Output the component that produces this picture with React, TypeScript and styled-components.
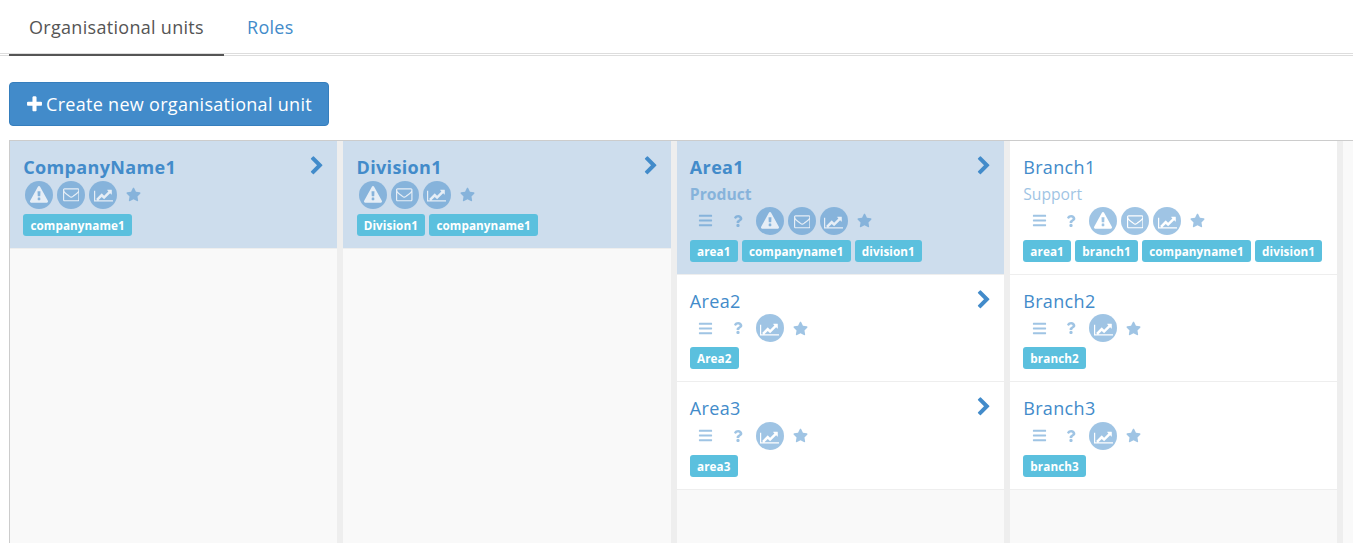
import * as React from 'react';
import styled, { createGlobalStyle } from 'styled-components';
import { FaBars, FaQuestion, FaStar } from 'react-icons/fa';

const GlobalStyle = createGlobalStyle`
  html, body, #root {
    height: 100%;
    margin: 0;
  }
  body {
    overflow: hidden;
    background: #fff;
    font-family: "Open Sans", "Liberation Sans", sans-serif;
    color: #555;
  }
`;

const Page = styled.div`
  height: 100%;
  display: flex;
  flex-direction: column;
  padding-left: 9px;
  box-sizing: border-box;
`;

const TabBar = styled.div`
  display: flex;
  height: 56px;
  margin-left: -9px;
  padding-left: 9px;
  border-bottom: 3px double #ddd;
  box-sizing: border-box;
  flex: none;
`;

const Tab = styled.div<{ $active?: boolean }>`
  height: 56px;
  padding: 15px 20px 0;
  box-sizing: border-box;
  font-size: 18px;
  line-height: 24px;
  letter-spacing: 0.3px;
  color: ${(p) => (p.$active ? '#555' : '#428bca')};
  border-bottom: 2px solid ${(p) => (p.$active ? '#555' : 'transparent')};
  margin-right: 3px;
`;

const Toolbar = styled.div`
  flex: none;
  padding: 26px 0 14px;
`;

const CreateButton = styled.button`
  display: flex;
  align-items: center;
  gap: 2px;
  width: 320px;
  height: 44px;
  padding: 0 15px;
  box-sizing: border-box;
  background: #428bca;
  border: 1px solid #357ebd;
  border-radius: 4px;
  color: #fff;
  font-family: inherit;
  font-size: 18px;
  letter-spacing: 0.3px;
  white-space: nowrap;
`;

const Board = styled.div`
  flex: 1;
  min-height: 0;
  display: flex;
  overflow: hidden;
  border-top: 1px solid #ccc;
  border-left: 1px solid #ccc;
`;

const Column = styled.div`
  flex: none;
  width: 333.33px;
  box-sizing: border-box;
  background: #f9f9f9;
  border-right: 6px solid #eee;
`;

const Card = styled.div<{ $selected?: boolean }>`
  position: relative;
  padding: 13px 13px 12px 13.2px;
  background: ${(p) => (p.$selected ? '#cddded' : '#fff')};
  border-bottom: 1px solid #eee;
`;

const Name = styled.div<{ $selected?: boolean }>`
  font-size: 18px;
  line-height: 26.5px;
  letter-spacing: 0.35px;
  font-weight: ${(p) => (p.$selected ? 700 : 400)};
  color: #428bca;
`;

const Subtitle = styled.div<{ $selected?: boolean }>`
  font-size: 15.7px;
  line-height: 22px;
  margin: 2.8px 0 1.5px;
  font-weight: ${(p) => (p.$selected ? 700 : 400)};
  color: #428bca;
  opacity: 0.5;
`;

const Chevron = styled.svg`
  position: absolute;
  top: 15px;
  right: 10px;
  width: 20px;
  height: 20px;
  fill: #428bca;
`;

const IconRow = styled.div`
  display: flex;
  align-items: center;
  height: 28px;
  color: #428bca;
`;

const PlainIcon = styled.span<{ $pull?: boolean }>`
  width: 32px;
  height: 28px;
  margin-left: ${(p) => (p.$pull ? '-1.5px' : '0')};
  display: flex;
  align-items: center;
  justify-content: center;
  font-size: 15px;
  opacity: 0.5;
`;

const Circle = styled.span`
  width: 28px;
  height: 28px;
  margin: 0 2px;
  border-radius: 50%;
  display: flex;
  align-items: center;
  justify-content: center;
  background: #428bca;
  color: #fff;
  opacity: 0.5;
`;

const Glyph = styled.svg`
  fill: currentColor;
  display: block;
`;

const TagRow = styled.div`
  display: flex;
  gap: 4px;
  margin-top: 5px;
`;

const Tag = styled.span`
  height: 22px;
  padding: 0 7.2px;
  border-radius: 3px;
  background: #5bc0de;
  color: #fff;
  font-size: 11.7px;
  font-weight: 700;
  line-height: 22px;
  letter-spacing: 0.1px;
  white-space: nowrap;
`;

const PlusIcon = () => (
  <Glyph viewBox="0 0 1792 1792" width={19} height={19}>
    <path d="M1600 736v192q0 40-28 68t-68 28h-416v416q0 40-28 68t-68 28h-192q-40 0-68-28t-28-68v-416h-416q-40 0-68-28t-28-68v-192q0-40 28-68t68-28h416v-416q0-40 28-68t68-28h192q40 0 68 28t28 68v416h416q40 0 68 28t28 68z" />
  </Glyph>
);

const WarningIcon = () => (
  <Glyph viewBox="0 0 1792 1792" width={18} height={18}>
    <path d="M1024 1375v-190q0-14-9.5-23.5t-22.5-9.5h-192q-13 0-22.5 9.5t-9.5 23.5v190q0 14 9.5 23.5t22.5 9.5h192q13 0 22.5-9.5t9.5-23.5zm-2-374l18-459q0-12-10-19-13-11-24-11h-220q-11 0-24 11-10 7-10 21l17 457q0 10 10 16.5t24 6.5h185q14 0 23.5-6.5t10.5-16.5zm-14-934l768 1408q35 63-2 126-17 29-46.5 46t-63.5 17h-1536q-34 0-63.5-17t-46.5-46q-37-63-2-126l768-1408q17-31 47-49t65-18 65 18 47 49z" />
  </Glyph>
);

const EnvelopeIcon = () => (
  <Glyph viewBox="0 0 1792 1792" width={16.5} height={16.5}>
    <path d="M1664 1504v-768q-32 36-69 66-268 206-426 338-51 43-83 67t-86.5 48.5-102.5 24.5h-2q-48 0-102.5-24.5t-86.5-48.5-83-67q-158-132-426-338-37-30-69-66v768q0 13 9.5 22.5t22.5 9.5h1472q13 0 22.5-9.5t9.5-22.5zm0-1051v-24.5l-.5-13-3-12.5-5.5-9-9-7.5-14-2.5h-1472q-13 0-22.5 9.5t-9.5 22.5q0 168 147 284 193 152 401 317 6 5 35 29.5t46 37.5 44.5 31.5 50.5 27.5 43 9h2q20 0 43-9t50.5-27.5 44.5-31.5 46-37.5 35-29.5q208-165 401-317 54-43 100.5-115.5t46.5-131.5zm128-37v1088q0 66-47 113t-113 47h-1472q-66 0-113-47t-47-113v-1088q0-66 47-113t113-47h1472q66 0 113 47t47 113z" />
  </Glyph>
);

const ChartIcon = () => (
  <Glyph viewBox="0 0 2048 1792" width={19} height={16.6}>
    <path d="M2048 1536v128h-2048v-1152h128v1024h1920zm-128-1088v435q0 21-19.5 29.5t-35.5-7.5l-121-121-633 633q-10 10-23 10t-23-10l-233-233-416 416-192-192 585-585q10-10 23-10t23 10l233 233 464-464-121-121q-16-16-7.5-35.5t29.5-19.5h435q14 0 23 9t9 23z" />
  </Glyph>
);

type Unit = {
  name: string;
  subtitle?: string;
  selected?: boolean;
  next?: boolean;
  tools?: boolean;
  alerts?: boolean;
  tags: string[];
};

const columns: Unit[][] = [
  [{ name: 'CompanyName1', selected: true, next: true, alerts: true, tags: ['companyname1'] }],
  [{ name: 'Division1', selected: true, next: true, alerts: true, tags: ['Division1', 'companyname1'] }],
  [
    {
      name: 'Area1',
      subtitle: 'Product',
      selected: true,
      next: true,
      tools: true,
      alerts: true,
      tags: ['area1', 'companyname1', 'division1'],
    },
    { name: 'Area2', next: true, tools: true, tags: ['Area2'] },
    { name: 'Area3', next: true, tools: true, tags: ['area3'] },
  ],
  [
    {
      name: 'Branch1',
      subtitle: 'Support',
      tools: true,
      alerts: true,
      tags: ['area1', 'branch1', 'companyname1', 'division1'],
    },
    { name: 'Branch2', tools: true, tags: ['branch2'] },
    { name: 'Branch3', tools: true, tags: ['branch3'] },
  ],
  [],
];

const UnitCard = ({ unit }: { unit: Unit }) => (
  <Card $selected={unit.selected}>
    <Name $selected={unit.selected}>{unit.name}</Name>
    {unit.next && (
      <Chevron viewBox="0 0 1792 1792">
        <path d="M1363 877l-742 742q-19 19-45 19t-45-19l-166-166q-19-19-19-45t19-45l531-531-531-531q-19-19-19-45t19-45l166-166q19-19 45-19t45 19l742 742q19 19 19 45t-19 45z" />
      </Chevron>
    )}
    {unit.subtitle && <Subtitle $selected={unit.selected}>{unit.subtitle}</Subtitle>}
    <IconRow>
      {unit.tools && (
        <>
          <PlainIcon><FaBars /></PlainIcon>
          <PlainIcon><FaQuestion size={12} /></PlainIcon>
        </>
      )}
      {unit.alerts && (
        <>
          <Circle><WarningIcon /></Circle>
          <Circle><EnvelopeIcon /></Circle>
        </>
      )}
      <Circle><ChartIcon /></Circle>
      <PlainIcon $pull><FaStar /></PlainIcon>
    </IconRow>
    <TagRow>
      {unit.tags.map((t) => (
        <Tag key={t}>{t}</Tag>
      ))}
    </TagRow>
  </Card>
);

export default function App() {
  return (
    <>
      <GlobalStyle />
      <Page>
        <TabBar>
          <Tab $active>Organisational units</Tab>
          <Tab>Roles</Tab>
        </TabBar>
        <Toolbar>
          <CreateButton>
            <PlusIcon />
            Create new organisational unit
          </CreateButton>
        </Toolbar>
        <Board>
          {columns.map((units, i) => (
            <Column key={i}>
              {units.map((u) => (
                <UnitCard key={u.name} unit={u} />
              ))}
            </Column>
          ))}
        </Board>
      </Page>
    </>
  );
}
